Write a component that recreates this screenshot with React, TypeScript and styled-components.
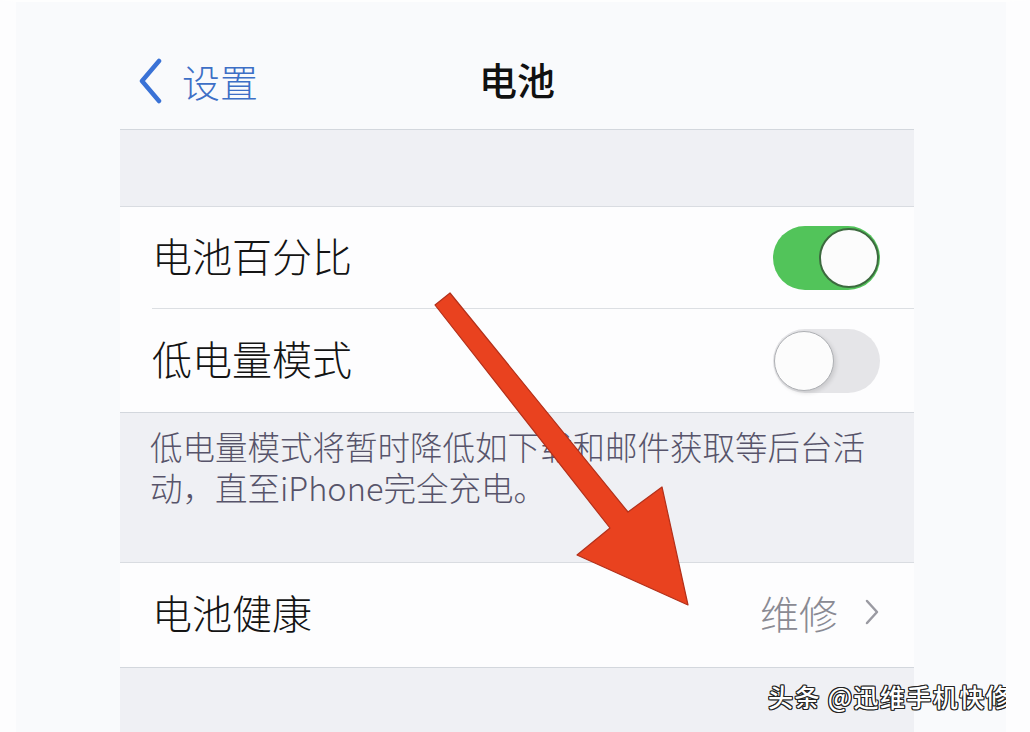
import React from "react";
import styled, { createGlobalStyle } from "styled-components";

const Global = createGlobalStyle`
  html, body { margin: 0; padding: 0; background: #ffffff; }
  body { font-family: "Noto Sans CJK SC", "Noto Sans", sans-serif; }
`;

const Page = styled.div`
  position: relative;
  width: 1030px;
  height: 732px;
  overflow: hidden;
  background: #f9fafc;
  box-sizing: border-box;
  border-top: 2px solid #fefefe;
  border-left: 16px solid #fdfdfe;
  border-right: 24px solid #fdfdfe;
`;

const Screen = styled.div`
  display: flex;
  flex-direction: column;
  width: 794px;
  margin-left: 104px;
`;

const NavBar = styled.div`
  position: relative;
  display: flex;
  align-items: center;
  justify-content: center;
  height: 127px;
  padding-top: 26px;
  box-sizing: border-box;
`;

const Back = styled.div`
  position: absolute;
  left: 16px;
  top: 56px;
  display: flex;
  align-items: center;
  gap: 18px;
  color: #3d6fc6;
  font-size: 38px;
  font-weight: 300;
  line-height: 46px;
`;

const Title = styled.div`
  font-size: 38px;
  font-weight: 500;
  color: #111111;
  line-height: 46px;
`;

const GroupGap = styled.div<{ $h: number }>`
  height: ${(p) => p.$h}px;
  background: #eff0f4;
  border-top: 1px solid #d3d7dd;
  border-bottom: 1px solid #d9dce1;
  box-sizing: border-box;
`;

const Footer = styled.div`
  height: 151px;
  box-sizing: border-box;
  background: #eff0f4;
  border-top: 1px solid #d3d7dd;
  border-bottom: 1px solid #d9dce1;
  padding: 12px 0 0 30px;
  color: #57546a;
  font-size: 32.5px;
  font-weight: 300;
  line-height: 41px;
  width: 794px;
`;

const FooterText = styled.div`
  width: 735px;
`;

const Row = styled.div<{ $h: number; $sep?: boolean }>`
  position: relative;
  display: flex;
  align-items: center;
  justify-content: space-between;
  height: ${(p) => p.$h}px;
  padding: 0 34px 0 32px;
  background: #fdfdfe;
  box-sizing: border-box;
  ${(p) =>
    p.$sep
      ? `&::after { content: ""; position: absolute; left: 32px; right: 0; bottom: 0; height: 1px; background: #dcdfe3; }`
      : ""}
`;

const Label = styled.div`
  font-size: 40px;
  font-weight: 300;
  line-height: 50px;
  margin-top: -6px;
  color: #141414;
`;

const Switch = styled.div<{ $on: boolean }>`
  position: relative;
  width: 107px;
  height: 64px;
  border-radius: 32px;
  background: ${(p) => (p.$on ? "#52c45a" : "#e5e5e8")};
  box-sizing: border-box;
  flex-shrink: 0;
`;

const Knob = styled.div<{ $on: boolean }>`
  position: absolute;
  top: 2px;
  ${(p) => (p.$on ? "right: 1px;" : "left: 1px;")}
  width: 60px;
  height: 60px;
  border-radius: 50%;
  background: #fcfcfc;
  box-sizing: border-box;
  border: ${(p) => (p.$on ? "2px solid #3d6a3f" : "1.5px solid #aeb0b4")};
  box-shadow: ${(p) => (p.$on ? "none" : "2px 2px 4px rgba(0,0,0,0.12)")};
`;

const Detail = styled.div`
  display: flex;
  align-items: center;
  gap: 26px;
  color: #8a8a93;
  font-size: 39px;
  font-weight: 300;
  line-height: 50px;
  margin-top: -6px;
`;

const Overlay = styled.svg`
  position: absolute;
  left: -16px;
  top: -2px;
  pointer-events: none;
`;

const Watermark = styled.div`
  position: absolute;
  left: 752px;
  top: 676px;
  white-space: nowrap;
  font-family: "Noto Sans CJK SC", sans-serif;
  font-size: 25px;
  font-weight: 500;
  line-height: 36px;
  color: #ffffff;
  letter-spacing: 1.4px;
  text-shadow: -1px -1px 0 #222, 1px -1px 0 #222, -1px 1px 0 #222, 1px 1px 0 #222,
    1px 0 0 #222, -1px 0 0 #222, 0 1px 0 #222, 0 -1px 0 #222;
`;

export default function App() {
  return (
    <>
      <Global />
      <Page>
        <Screen>
          <NavBar>
            <Back>
              <svg width="28" height="46" viewBox="0 0 28 46">
                <path
                  d="M23 3 L6 23 L23 43"
                  fill="none"
                  stroke="#3a72d6"
                  strokeWidth="4.5"
                  strokeLinecap="round"
                  strokeLinejoin="round"
                />
              </svg>
              <span>设置</span>
            </Back>
            <Title>电池</Title>
          </NavBar>
          <GroupGap $h={78} />
          <Row $h={102} $sep>
            <Label>电池百分比</Label>
            <Switch $on>
              <Knob $on />
            </Switch>
          </Row>
          <Row $h={103}>
            <Label>低电量模式</Label>
            <Switch $on={false}>
              <Knob $on={false} />
            </Switch>
          </Row>
          <Footer>
            <FooterText>
              低电量模式将暂时降低如下载和邮件获取等后台活动，直至iPhone完全充电。
            </FooterText>
          </Footer>
          <Row $h={104}>
            <Label>电池健康</Label>
            <Detail>
              <span>维修</span>
              <svg width="16" height="28" viewBox="0 0 16 28">
                <path
                  d="M3 3 L13 14 L3 25"
                  fill="none"
                  stroke="#9a9aa2"
                  strokeWidth="2.5"
                  strokeLinecap="round"
                  strokeLinejoin="round"
                />
              </svg>
            </Detail>
          </Row>
          <GroupGap $h={70} />
        </Screen>
        <Overlay width="1030" height="732" viewBox="0 0 1030 732">
          <polygon
            points="435,305 450,293 628,512 662,487 688,605 577,555 610,528"
            fill="#e9421f"
            stroke="#b3301a"
            strokeWidth="1.2"
            strokeLinejoin="round"
          />
        </Overlay>
        <Watermark>头条 @迅维手机快修</Watermark>
      </Page>
    </>
  );
}
